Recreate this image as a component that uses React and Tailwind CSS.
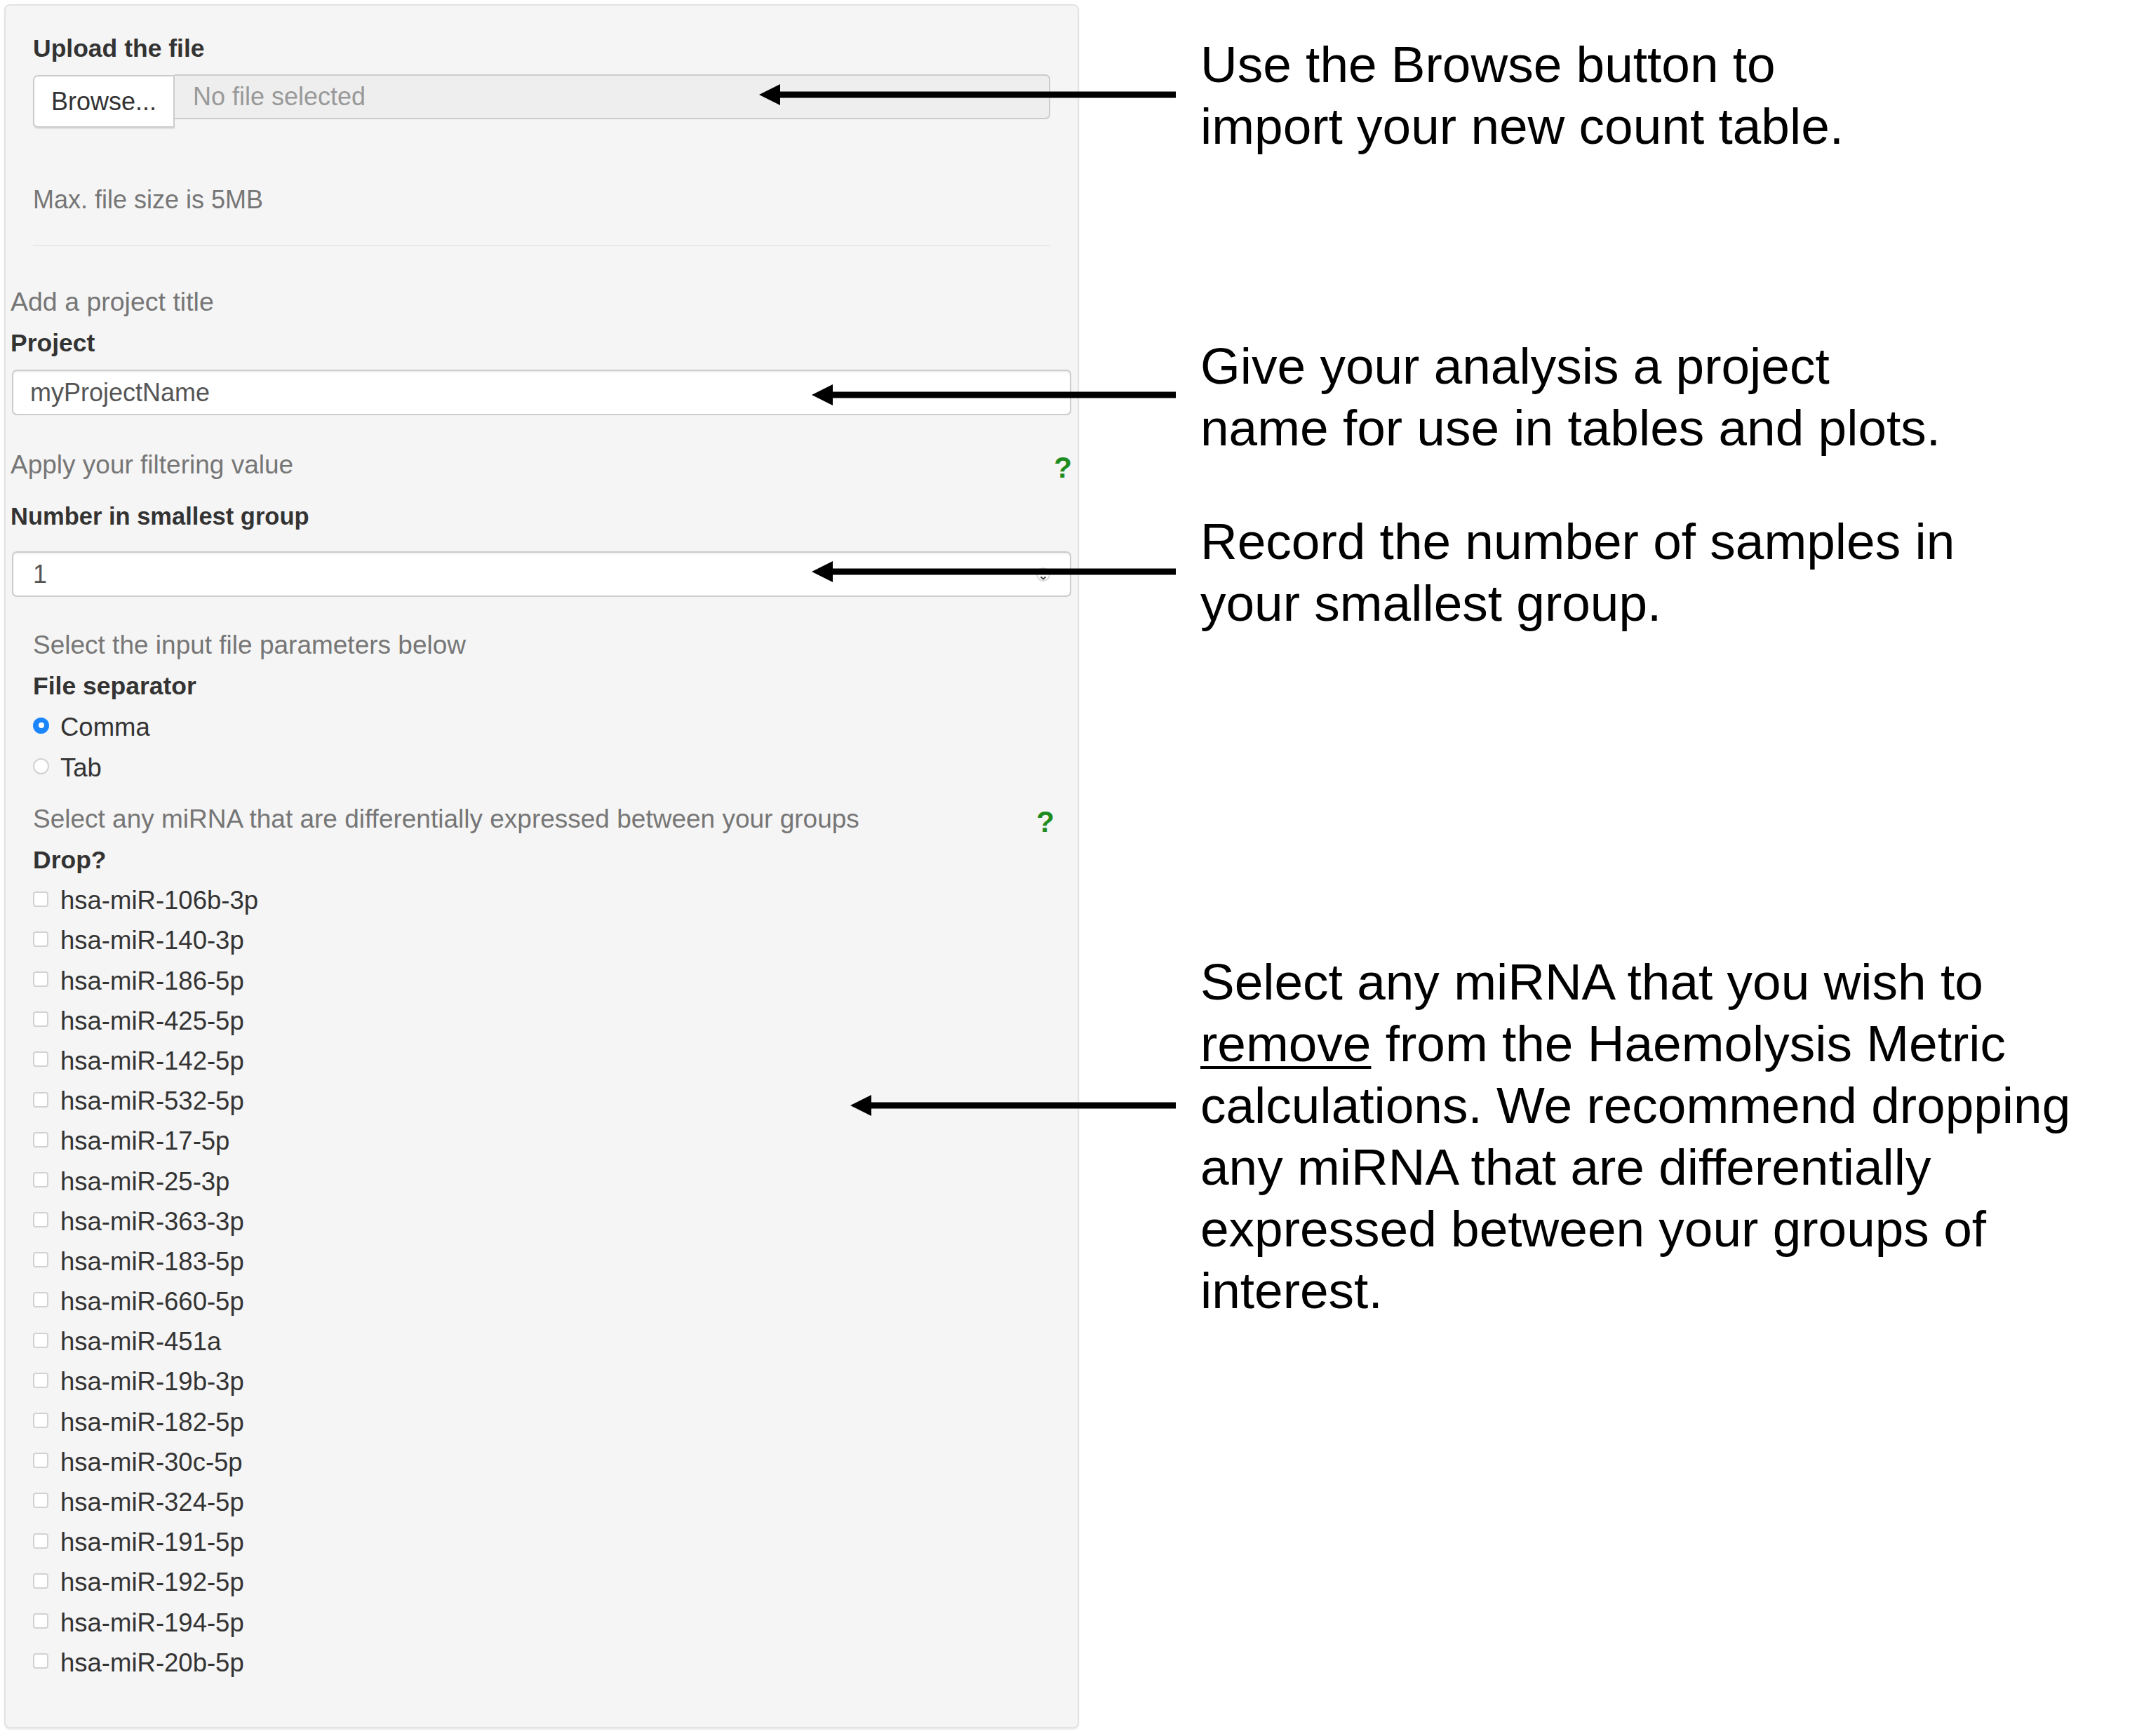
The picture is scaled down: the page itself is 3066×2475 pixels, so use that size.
import React from 'react';

const mirnas = [
  'hsa-miR-106b-3p',
  'hsa-miR-140-3p',
  'hsa-miR-186-5p',
  'hsa-miR-425-5p',
  'hsa-miR-142-5p',
  'hsa-miR-532-5p',
  'hsa-miR-17-5p',
  'hsa-miR-25-3p',
  'hsa-miR-363-3p',
  'hsa-miR-183-5p',
  'hsa-miR-660-5p',
  'hsa-miR-451a',
  'hsa-miR-19b-3p',
  'hsa-miR-182-5p',
  'hsa-miR-30c-5p',
  'hsa-miR-324-5p',
  'hsa-miR-191-5p',
  'hsa-miR-192-5p',
  'hsa-miR-194-5p',
  'hsa-miR-20b-5p',
];

// arrows drawn over panel + notes: [y, tipX, tailX]
const arrows = [
  [135, 1082, 1676],
  [563, 1157, 1676],
  [815, 1157, 1676],
  [1576, 1212, 1676],
];

function HelpMark({ className = '' }) {
  return (
    <span className={`text-[42px] font-bold leading-none text-[#1f8c1f] ${className}`}>?</span>
  );
}

function Checkbox() {
  return (
    <span className="mb-[6px] h-[22px] w-[22px] shrink-0 rounded-[4px] border-2 border-[#d2d2d2] bg-white" />
  );
}

function Radio({ checked }) {
  return checked ? (
    <span className="mb-[6px] flex h-[23px] w-[23px] shrink-0 items-center justify-center rounded-full bg-[#1b86fb]">
      <span className="h-[8px] w-[8px] rounded-full bg-white" />
    </span>
  ) : (
    <span className="mb-[6px] h-[23px] w-[23px] shrink-0 rounded-full border-2 border-[#d2d2d2] bg-white" />
  );
}

function Arrows() {
  return (
    <svg
      className="pointer-events-none absolute left-0 top-0"
      width="3066"
      height="2475"
      viewBox="0 0 3066 2475"
    >
      {arrows.map(([y, tip, tail]) => (
        <g key={y} fill="#000">
          <rect x={tip + 28} y={y - 4.5} width={tail - tip - 28} height="9" />
          <polygon points={`${tip},${y} ${tip + 30},${y - 15} ${tip + 30},${y + 15}`} />
        </g>
      ))}
    </svg>
  );
}

export default function App() {
  return (
    <div className="relative h-[2475px] w-[3066px] overflow-hidden bg-white font-['Liberation_Sans',Arial,sans-serif]">
      <div className="flex">
        {/* well panel */}
        <div className="ml-[6px] mt-[6px] h-[2458px] w-[1532px] shrink-0 rounded-[8px] border-2 border-[#e3e3e3] bg-[#f5f5f5] shadow-[0_2px_2px_rgba(0,0,0,0.08)]">
          {/* upload section */}
          <div className="pl-[39px] pr-[39px]">
            <div className="mt-[42px] flex h-[40px] items-center text-[35.5px] font-bold text-[#333]">
              Upload the file
            </div>
            <div className="mt-[15px] flex h-[77px] items-start">
              <div className="mt-[2px] flex h-[75px] w-[202px] shrink-0 items-center justify-center rounded-l-[7px] border-2 border-[#cccccc] bg-white text-[36px] text-[#333] shadow-[0_2px_1px_rgba(0,0,0,0.08)]">
                Browse...
              </div>
              <div className="mt-[1px] flex h-[64px] flex-1 items-center rounded-r-[7px] border-2 border-l-0 border-[#cccccc] bg-[#eeeeee] pl-[26px] text-[36px] text-[#999]">
                No file selected
              </div>
            </div>
            <div className="mt-[83px] flex h-[40px] items-center text-[36px] text-[#767676]">
              Max. file size is 5MB
            </div>
            <div className="mt-[44px] h-[2px] bg-[#e8e8e8]" />
          </div>

          {/* project + filter section */}
          <div className="pl-[7px] pr-[7px]">
            <div className="mt-[59px] flex h-[40px] items-center text-[37.5px] text-[#767676]">
              Add a project title
            </div>
            <div className="mt-[20px] flex h-[40px] items-center text-[35.5px] font-bold text-[#333]">
              Project
            </div>
            <div className="ml-[2px] mr-[2px] mt-[17px] flex h-[65px] items-center rounded-[7px] border-2 border-[#cccccc] bg-white pl-[24px] text-[36px] text-[#555] shadow-[inset_0_2px_2px_rgba(0,0,0,0.06)]">
              myProjectName
            </div>
            <div className="mt-[51px] flex h-[40px] items-center justify-between text-[37px] text-[#767676]">
              <span>Apply your filtering value</span>
              <HelpMark className="mr-[1px] mt-[8px]" />
            </div>
            <div className="mt-[34px] flex h-[40px] items-center text-[34.5px] font-bold text-[#333]">
              Number in smallest group
            </div>
            <div className="ml-[2px] mr-[2px] mt-[29px] flex h-[65px] items-center justify-between rounded-[7px] border-2 border-[#cccccc] bg-white pl-[28px] pr-[28px] text-[36px] text-[#555] shadow-[inset_0_2px_2px_rgba(0,0,0,0.06)]">
              <span>1</span>
              <svg width="20" height="30" viewBox="0 0 20 30" fill="none">
                <circle cx="10" cy="15" r="9" stroke="#d4d4d4" strokeWidth="1.5" />
                <path d="M6.5 11.5 L10 8.5 L13.5 11.5" stroke="#bbb" strokeWidth="1.6" />
                <path d="M6.5 18.5 L10 21.5 L13.5 18.5" stroke="#444" strokeWidth="2" />
              </svg>
            </div>
          </div>

          {/* file params + miRNA section */}
          <div className="pl-[39px] pr-[33px]">
            <div className="mt-[49px] flex h-[40px] items-center text-[37px] text-[#767676]">
              Select the input file parameters below
            </div>
            <div className="mt-[19px] flex h-[40px] items-center text-[35.5px] font-bold text-[#333]">
              File separator
            </div>
            <div className="mt-[18px] flex h-[40px] items-center gap-[16px] text-[36.5px] text-[#333]">
              <Radio checked />
              <span>Comma</span>
            </div>
            <div className="mt-[18px] flex h-[40px] items-center gap-[16px] text-[36.5px] text-[#333]">
              <Radio />
              <span>Tab</span>
            </div>
            <div className="mt-[33px] flex h-[40px] items-center justify-between text-[37px] text-[#767676]">
              <span>Select any miRNA that are differentially expressed between your groups</span>
              <HelpMark className="mt-[8px]" />
            </div>
            <div className="mt-[19px] flex h-[40px] items-center text-[35.5px] font-bold text-[#333]">
              Drop?
            </div>
            <div className="mt-[9px] flex flex-col">
              {mirnas.map((name) => (
                <div key={name} className="flex h-[57.2px] items-center gap-[17px] text-[36.5px] text-[#333]">
                  <Checkbox />
                  <span>{name}</span>
                </div>
              ))}
            </div>
          </div>
        </div>

        {/* notes */}
        <div className="ml-[173px] flex flex-col text-[73px] leading-[88px] text-black">
          <div className="mt-[48px]">
            <div>Use the Browse button to</div>
            <div>import your new count table.</div>
          </div>
          <div className="mt-[254px]">
            <div>Give your analysis a project</div>
            <div>name for use in tables and plots.</div>
          </div>
          <div className="mt-[74px]">
            <div>Record the number of samples in</div>
            <div>your smallest group.</div>
          </div>
          <div className="mt-[452px]">
            <div>Select any miRNA that you wish to</div>
            <div>
              <span className="underline decoration-4 underline-offset-[7px]">remove</span> from the Haemolysis Metric
            </div>
            <div>calculations. We recommend dropping</div>
            <div>any miRNA that are differentially</div>
            <div>expressed between your groups of</div>
            <div>interest.</div>
          </div>
        </div>
      </div>
      <Arrows />
    </div>
  );
}
